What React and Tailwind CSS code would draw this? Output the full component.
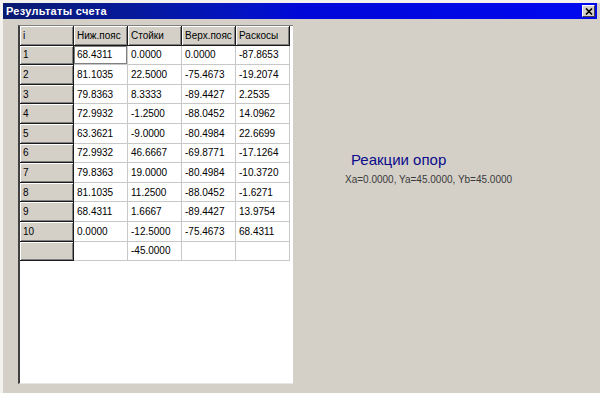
import React from "react";

const rows = [
    ["1", "68.4311", "0.0000", "0.0000", "-87.8653"],
    ["2", "81.1035", "22.5000", "-75.4673", "-19.2074"],
    ["3", "79.8363", "8.3333", "-89.4427", "2.2535"],
    ["4", "72.9932", "-1.2500", "-88.0452", "14.0962"],
    ["5", "63.3621", "-9.0000", "-80.4984", "22.6699"],
    ["6", "72.9932", "46.6667", "-69.8771", "-17.1264"],
    ["7", "79.8363", "19.0000", "-80.4984", "-10.3720"],
    ["8", "81.1035", "11.2500", "-88.0452", "-1.6271"],
    ["9", "68.4311", "1.6667", "-89.4427", "13.9754"],
    ["10", "0.0000", "-12.5000", "-75.4673", "68.4311"],
    ["", "", "-45.0000", "", ""],
];

const headers = ["i", "Ниж.пояс", "Стойки", "Верх.пояс", "Раскосы"];

function FixedCell({ children }) {
    return (
        <div className="w-[54px] h-[19.6px] shrink-0 bg-[#d4d0c8] border-r border-b border-[#1a1a1a] shadow-[inset_1px_1px_0_#ffffff,inset_-1px_-1px_0_#808080] pl-[3px] flex items-center text-black">
            {children}
        </div>
    );
}

function Cell({ children, focused }) {
    return (
        <div
            className={
                "w-[54px] h-[19.6px] shrink-0 bg-white border-r border-b border-[#c8c8c8] pl-[3px] flex items-center text-black" +
                (focused ? " shadow-[inset_1px_1px_0_#808080,inset_-1px_-1px_0_#808080]" : "")
            }
        >
            {children}
        </div>
    );
}

export default function App() {
    return (
        <div className="w-[600px] h-[393px] bg-[#d4d0c8] border-t-[3px] border-l-[3px] border-t-[#f4f2ee] border-l-[#f4f2ee] font-['Liberation_Sans',Arial,sans-serif] overflow-hidden">
            <div className="h-[16px] mr-[3px] flex items-center justify-between bg-gradient-to-r from-[#0a1a70] via-[#0008d8] to-[#0008f0] pl-[3px] pr-[2px]">
                <span className="text-white font-bold text-[11px] tracking-[0.3px]">Результаты счета</span>
                <div className="w-[13px] h-[12px] bg-[#d4d0c8] border border-t-white border-l-white border-r-[#404040] border-b-[#404040] flex items-center justify-center">
                    <svg width="8" height="7" viewBox="0 0 8 7">
                        <path d="M1 0.5 L7 6.5 M7 0.5 L1 6.5" stroke="#000" strokeWidth="1.6" />
                    </svg>
                </div>
            </div>
            <div className="flex pt-[6px] pl-[15px]">
                <div className="w-[275px] h-[359px] bg-white border-l-2 border-t border-b border-l-[#404040] border-t-[#808080] border-b-[#e8e6e0] text-[10px] flex flex-col">
                    <div className="flex">
                        {headers.map((h) => (
                            <FixedCell key={h}>{h}</FixedCell>
                        ))}
                    </div>
                    {rows.map((r, i) => (
                        <div className="flex" key={i}>
                            <FixedCell>{r[0]}</FixedCell>
                            {r.slice(1).map((v, j) => (
                                <Cell key={j} focused={i === 0 && j === 0}>
                                    {v}
                                </Cell>
                            ))}
                        </div>
                    ))}
                </div>
                <div className="flex flex-col pl-[52px] pt-[126px]">
                    <div className="text-[15px] text-[#0a0a8a] pl-[6px] leading-[18px]">Реакции опор</div>
                    <div className="text-[10px] text-[#3a3a3a] mt-[3px]">Xa=0.0000, Ya=45.0000, Yb=45.0000</div>
                </div>
            </div>
        </div>
    );
}
